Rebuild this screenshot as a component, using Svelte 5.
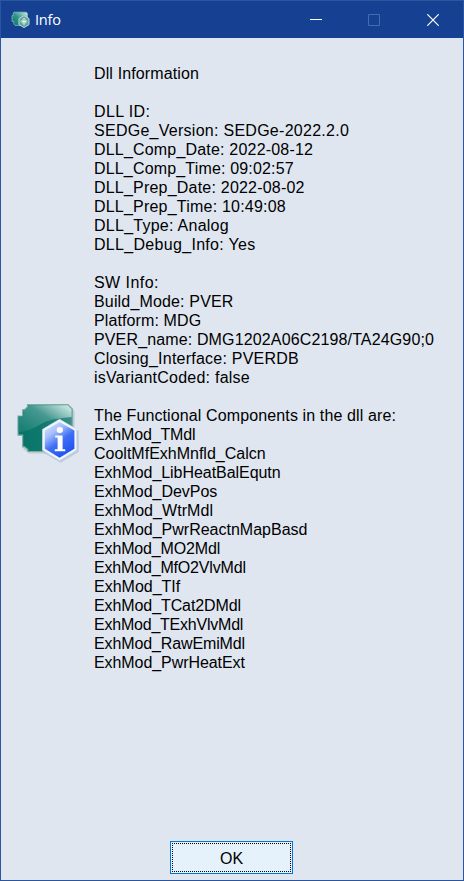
<script>
  const sections = [
    [['Dll Information', 0.13]],
    [
      ['DLL ID:', 0.38],
      ['SEDGe_Version: SEDGe-2022.2.0', 0.27],
      ['DLL_Comp_Date: 2022-08-12', 0.19],
      ['DLL_Comp_Time: 09:02:57', 0.17],
      ['DLL_Prep_Date: 2022-08-02', 0.21],
      ['DLL_Prep_Time: 10:49:08', 0.21],
      ['DLL_Type: Analog', 0.26],
      ['DLL_Debug_Info: Yes', 0.31]
    ],
    [
      ['SW Info:', 0.45],
      ['Build_Mode: PVER', 0.16],
      ['Platform: MDG', 0.11],
      ['PVER_name: DMG1202A06C2198/TA24G90;0', 0.14],
      ['Closing_Interface: PVERDB', 0.23],
      ['isVariantCoded: false', 0.24]
    ],
    [
      ['The Functional Components in the dll are:', 0.12],
      ['ExhMod_TMdl', -0.17],
      ['CooltMfExhMnfld_Calcn', 0],
      ['ExhMod_LibHeatBalEqutn', -0.05],
      ['ExhMod_DevPos', -0.03],
      ['ExhMod_WtrMdl', 0.06],
      ['ExhMod_PwrReactnMapBasd', 0],
      ['ExhMod_MO2Mdl', -0.14],
      ['ExhMod_MfO2VlvMdl', -0.17],
      ['ExhMod_TIf', 0],
      ['ExhMod_TCat2DMdl', -0.09],
      ['ExhMod_TExhVlvMdl', -0.22],
      ['ExhMod_RawEmiMdl', -0.12],
      ['ExhMod_PwrHeatExt', -0.07]
    ]
  ];
</script>

<div class="window">
  <header>
    <svg class="app-icon" width="20" height="18" viewBox="0 0 20 18">
      <defs>
        <linearGradient id="mini" x1="0" y1="1" x2="1" y2="0">
          <stop offset="0" stop-color="#087565" />
          <stop offset=".5" stop-color="#2f9688" />
          <stop offset="1" stop-color="#d5eee8" />
        </linearGradient>
      </defs>
      <path d="M3 1.2h12.3l1.2 1.2v10.8l-1.2 1.2H4L2.8 13v-2.5H1v-6h1.3V2z" fill="url(#mini)" stroke="#8fc3bd" stroke-width=".7" />
      <path d="M13 4.7l5 2.9v6l-5 3-5-3v-6z" fill="#5fa59c" stroke="#b9ddd6" />
      <path d="M13 7l2.9 3.4-2.9 3.4-2.9-3.4z" fill="#83b9b1" stroke="#d9eee9" stroke-width=".7" />
      <path d="M13 8.5v4M11 10.5h4" stroke="#eefaf7" />
    </svg>
    <span class="caption">Info</span>
    <div class="controls">
      <svg width="12" height="12" viewBox="0 0 12 12"><path d="M0 5.5h12" stroke="#fff" /></svg>
      <svg width="12" height="12" viewBox="0 0 12 12"><path d="M.5.5h11v11H.5z" fill="none" stroke="#456bae" /></svg>
      <svg width="12" height="12" viewBox="0 0 12 12"><path d="M.3.3l11.4 11.4M11.7.3L.3 11.7" stroke="#fff" stroke-width="1.2" /></svg>
    </div>
  </header>

  <main>
    <svg class="info-icon" width="66" height="64" viewBox="0 0 66 64">
      <defs>
        <linearGradient id="body" x1="0" y1="0" x2="1" y2="0">
          <stop offset="0" stop-color="#057468" />
          <stop offset=".5" stop-color="#12796e" />
          <stop offset="1" stop-color="#3d9188" />
        </linearGradient>
        <linearGradient id="gloss" x1="0" y1=".8" x2="1" y2="0">
          <stop offset="0" stop-color="#1b8075" />
          <stop offset=".5" stop-color="#459890" />
          <stop offset="1" stop-color="#dcf0ec" />
        </linearGradient>
        <linearGradient id="hex" x1=".1" y1="0" x2=".7" y2="1">
          <stop offset="0" stop-color="#d9e6ff" />
          <stop offset=".3" stop-color="#a6c0fc" />
          <stop offset=".58" stop-color="#3f6ff5" />
          <stop offset="1" stop-color="#1c4fee" />
        </linearGradient>
      </defs>
      <path d="M13 6h42l4.5 5v38l-4.5 4.5H14L8.5 49v-13H3.5V18H8v-6z" fill="#9cafb5" opacity=".5" />
      <path d="M12.5 4.6H53L57.3 9V47.5L53 51.5H12.8V49.5L9.5 46.8H7.6V35.2H3V16H7.6V9.8H9.5L12.5 7z" fill="url(#body)" stroke="#7cada9" stroke-width="1.2" />
      <path d="M13.2 5.3H52.7L56.6 9.3V17C43 18.5 37 19 29 22.5C21 26.5 15 31.5 3.7 32V16.7H8.3V10.5H9.8L13.2 7.4z" fill="url(#gloss)" />
      <path d="M45.5 20.5L63.7 31v21L45.5 62.8 27.3 52V31z" fill="#aab8c9" opacity=".6" />
      <path d="M44.6 19.3L61.6 29.3v20.8L44.6 60.4 27.6 50.1V29.3z" fill="#f2f6ff" stroke="#d3def0" stroke-width=".7" />
      <path d="M44.6 21.9L59.4 30.6v18.2L44.6 57.8 29.8 48.8V30.6z" fill="url(#hex)" />
      <ellipse cx="44.8" cy="30" rx="3.2" ry="2.9" fill="#fff" />
      <path d="M40.2 35.5h7.4v13.8h2.6v2H39.8v-2h2.8V37.5h-2.4z" fill="#fff" />
    </svg>
    <div class="message">
      {#each sections as lines}
        <section>
          {#each lines as [text, tracking]}
            <p style="letter-spacing: {tracking}px">{text}</p>
          {/each}
        </section>
      {/each}
    </div>
  </main>

  <footer>
    <button><span>OK</span></button>
  </footer>
</div>

<style>
  .window {
    box-sizing: border-box;
    width: 464px;
    height: 881px;
    display: flex;
    flex-direction: column;
    overflow: hidden;
    border: 1px solid #2a559f;
    background: #dfe6f0;
    color: #000;
    font: 16px/19px 'Liberation Sans', Arial, sans-serif;
  }
  header {
    height: 37px;
    flex: none;
    display: flex;
    align-items: center;
    padding-left: 10px;
    background: #164193;
    color: #fff;
  }
  .caption {
    margin-left: 4px;
    font: 14.5px/20px 'Open Sans', 'Noto Sans', sans-serif;
    letter-spacing: -0.2px;
  }
  .controls {
    display: flex;
    gap: 47px;
    margin-left: auto;
    padding-right: 24px;
  }
  .controls svg:first-child {
    margin-right: -1px;
  }
  svg {
    display: block;
    flex: none;
  }
  main {
    flex: 1;
    display: flex;
    align-items: flex-start;
    padding: 26px 0 0 14px;
  }
  .info-icon {
    margin-top: 336px;
  }
  .message {
    display: flex;
    flex-direction: column;
    gap: 19px;
    margin-left: 13px;
  }
  p {
    margin: 0;
    white-space: nowrap;
  }
  footer {
    display: flex;
    justify-content: center;
    padding: 0 2px 6px 0;
  }
  button {
    box-sizing: border-box;
    display: flex;
    width: 123px;
    height: 33px;
    margin: 0;
    padding: 1px;
    border: 1px solid #0078d7;
    background: #e5f1fb;
    color: #000;
    font: inherit;
  }
  button span {
    flex: 1;
    padding-left: 1px;
    border: 1px dotted #000;
    line-height: 29px;
  }
</style>
